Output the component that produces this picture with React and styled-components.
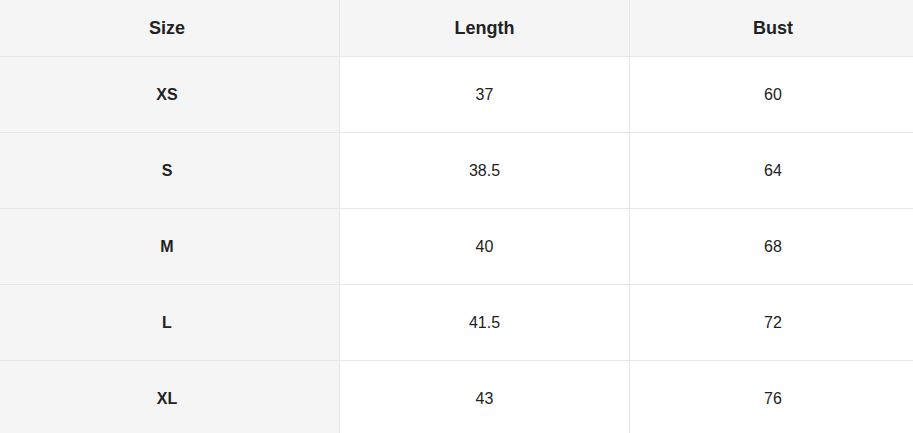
import React from "react";
import styled, { createGlobalStyle } from "styled-components";

const Global = createGlobalStyle`
  html, body { margin: 0; padding: 0; background: #fff; }
  body { font-family: "Liberation Sans", Arial, sans-serif; }
`;

const Table = styled.div`
  display: grid;
  grid-template-columns: 340px 290px 1fr;
  width: 913px;
  color: #222;
`;

const Cell = styled.div`
  display: flex;
  align-items: center;
  justify-content: center;
  box-sizing: border-box;
  height: ${(p) => (p.$head ? "57px" : "76px")};
  border-bottom: 1px solid #e6e6e6;
  border-right: ${(p) => (p.$col === 2 ? "none" : "1px solid #e6e6e6")};
  padding-right: ${(p) => (p.$col === 0 ? "5px" : "0")};
  padding-left: ${(p) => (p.$col === 2 ? "3px" : "0")};
  background: ${(p) => (p.$shade ? "#f5f5f5" : "#fff")};
  font-size: ${(p) => (p.$head ? "18px" : "16px")};
  font-weight: ${(p) => (p.$bold ? 700 : 400)};
`;

const head = ["Size", "Length", "Bust"];
const rows = [
  ["XS", "37", "60"],
  ["S", "38.5", "64"],
  ["M", "40", "68"],
  ["L", "41.5", "72"],
  ["XL", "43", "76"],
];

export default function App() {
  return (
    <>
      <Global />
      <Table>
        {head.map((h, i) => (
          <Cell key={h} $head $bold $shade $col={i}>
            {h}
          </Cell>
        ))}
        {rows.map((r) =>
          r.map((v, i) => (
            <Cell key={r[0] + i} $bold={i === 0} $shade={i === 0} $col={i}>
              {v}
            </Cell>
          ))
        )}
      </Table>
    </>
  );
}
